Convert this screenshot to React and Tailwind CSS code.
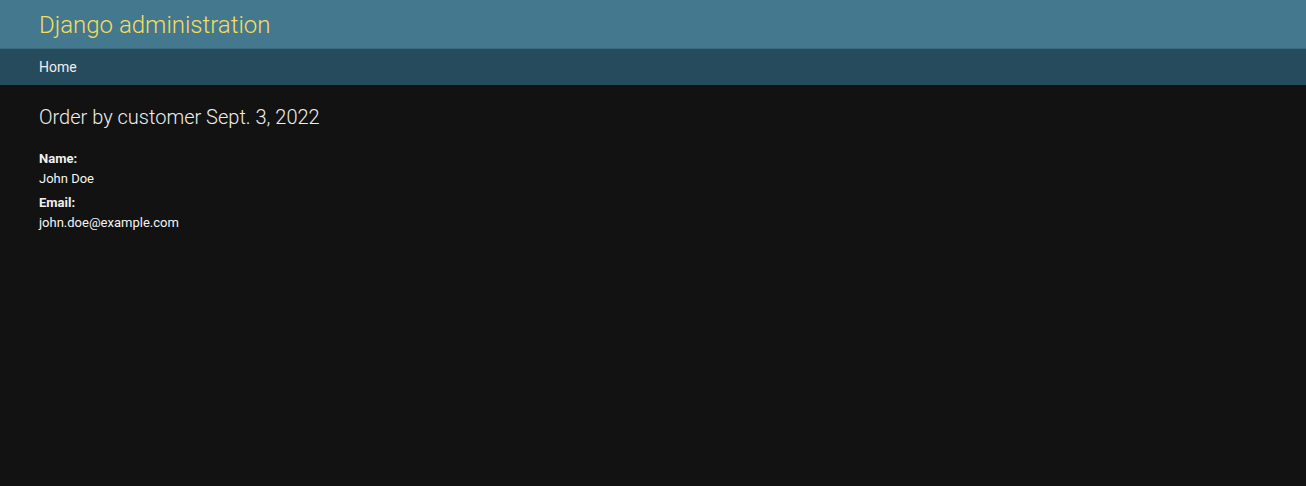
const App = () => {
  return (
    <div className="min-h-screen bg-[#121212] text-[#f5f5f5]" style={{ fontFamily: 'Roboto, "Liberation Sans", sans-serif' }}>
      <header className="h-[48px] bg-[#44788f] px-[39px] pt-[2px] flex items-center">
        <h1 className="text-[24px] font-light text-[#f5dd5d] leading-none">Django administration</h1>
      </header>
      <div className="h-px bg-[#3a6a80]" />
      <nav className="h-[36px] bg-[#264b5d] px-[39px] flex items-center">
        <a className="text-[14px] text-[#eeeeee]">Home</a>
      </nav>
      <main className="px-[39px] pt-[20px]">
        <h1 className="text-[20px] font-light leading-[24px] text-[#eeeeee]">Order by customer Sept. 3, 2022</h1>
        <div className="mt-[21px] text-[13px]">
          <p className="font-bold leading-[18px] text-[#f0f0f0]">Name:</p>
          <p className="mt-[2px] leading-[18px]">John Doe</p>
          <p className="mt-[6px] font-bold leading-[18px] text-[#f0f0f0]">Email:</p>
          <p className="mt-[2px] leading-[18px]">john.doe@example.com</p>
        </div>
      </main>
    </div>
  );
};

export default App;
